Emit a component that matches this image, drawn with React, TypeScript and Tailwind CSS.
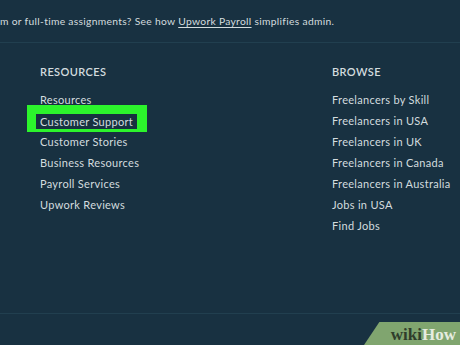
const resources = ["Resources", "Customer Support", "Customer Stories", "Business Resources", "Payroll Services", "Upwork Reviews"];
const browse = ["Freelancers by Skill", "Freelancers in USA", "Freelancers in UK", "Freelancers in Canada", "Freelancers in Australia", "Jobs in USA", "Find Jobs"];

export default function App() {
  return (
    <div className="relative h-[345px] w-[460px] overflow-hidden bg-[#183141] text-[#d3dcdf]" style={{ fontFamily: '"Lato", "Open Sans", sans-serif' }}>
      <div className="flex h-[43px] items-start border-b border-[#213f4f] pt-[14px] text-[10.3px] tracking-[0.3px] whitespace-nowrap">
        <p>
          m or full-time assignments? See how{" "}
          <span className="underline underline-offset-2">Upwork Payroll</span> simplifies admin.
        </p>
      </div>

      <div className="flex h-[271px] border-b border-[#213f4f] pt-[22px]">
        <div className="w-[332px] shrink-0 pl-[40px]">
          <h3 className="text-[11px] font-semibold tracking-[0.4px] uppercase leading-[14px]">Resources</h3>
          <ul className="mt-[11px] flex flex-col">
            {resources.map((r) => (
              <li key={r} className="flex h-[21px] items-center text-[11px] tracking-[0.3px]">
                {r === "Customer Support" ? (
                  <span className="-mt-[6px] -ml-[13px] border-t-[9px] border-r-[10px] border-b-[3px] border-l-[9px] border-[#2cf42c] bg-[#173140] px-[4px] py-[1px] leading-[13px]">
                    {r}
                  </span>
                ) : (
                  r
                )}
              </li>
            ))}
          </ul>
        </div>
        <div>
          <h3 className="text-[11px] font-semibold tracking-[0.4px] uppercase leading-[14px]">Browse</h3>
          <ul className="mt-[11px] flex flex-col">
            {browse.map((b) => (
              <li key={b} className="flex h-[21px] items-center text-[11px] tracking-[0.3px]">{b}</li>
            ))}
          </ul>
        </div>
      </div>

      <div className="absolute right-0 bottom-0 flex h-[23px] w-[96px] items-center justify-end bg-[#80a56f] pr-[4px] pt-[2px] [clip-path:polygon(16%_0,100%_0,100%_100%,0_100%)]" style={{ fontFamily: '"Liberation Serif", serif' }}>
        <span className="text-[17px] font-bold text-[#2f3d2b]">wiki</span>
        <span className="text-[17px] font-bold text-[#e6ece0]">How</span>
      </div>
    </div>
  );
}
